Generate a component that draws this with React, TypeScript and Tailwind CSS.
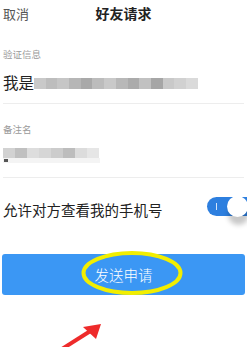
import React from "react";

const nameBlocks = ["#c9c9c9", "#bdbdbd", "#c6c6c6", "#b6b6b6", "#a9a9a9", "#bcbcbc", "#c9c9c9", "#b8b8b8", "#ababab", "#c1c1c1", "#a6a6a6", "#c9c9c9", "#d1d1d1", "#dadada"];
const remarkBlocks = ["#d2d2d2", "#c0c0c0", "#dddddd", "#d6d6d6", "#cccccc", "#bdbdbd", "#dcdcdc", "#e6e6e6"];

const App = () => {
  return (
    <div className="w-[247px] h-[347px] bg-white overflow-hidden font-['Noto_Sans_CJK_SC','Noto_Sans',sans-serif]">
      {/* header */}
      <div className="grid grid-cols-[1fr_auto_1fr] items-center h-[27px] px-[3px]">
        <span className="text-[13px] text-[#555]">取消</span>
        <span className="text-[14px] font-bold text-[#222]">好友请求</span>
        <span />
      </div>

      <div className="mt-[21px] px-[3px] text-[9.5px] leading-[12px] text-[#9a9a9a]">验证信息</div>
      <div className="mt-[12px] px-[3px] flex items-center h-[20px]">
        <span className="text-[15.5px] leading-[20px] text-[#222]">我是</span>
        <div className="flex h-[11px] mt-[3px]">
          {nameBlocks.map((c, i) => (
            <div key={i} className="w-[11.7px] h-full" style={{ backgroundColor: c }} />
          ))}
        </div>
      </div>
      <div className="mt-[11px] mx-[3px] h-px bg-[#ededed]" />

      <div className="mt-[19px] px-[3px] text-[9.5px] leading-[12px] text-[#9a9a9a]">备注名</div>
      <div className="mt-[13px] px-[3px] flex flex-col">
        <div className="flex h-[10px]">
          {remarkBlocks.map((c, i) => (
            <div key={i} className="w-[12px] h-full" style={{ backgroundColor: c }} />
          ))}
        </div>
        <div className="flex items-center h-[5px] w-[97px] bg-[#f4f4f4]">
          <div className="w-[4px] h-[3px] bg-[#555] ml-[1px]" />
        </div>
      </div>
      <div className="mt-[14px] mx-[3px] h-px bg-[#ededed]" />

      {/* switch row */}
      <div className="mt-[18px] pl-[3px] flex items-start justify-between h-[36px]">
        <span className="mt-[4px] text-[14.5px] leading-[20px] text-[#222]">允许对方查看我的手机号</span>
        <div className="relative w-[40px] h-[19px] rounded-l-full bg-[#2d7fdf] mt-[1px]">
          <div className="absolute left-[9px] top-[6px] w-px h-[7px] bg-white/80" />
          <div className="absolute right-[-1px] top-[-1px] w-[21px] h-[21px] rounded-full bg-white shadow-[1px_8px_5px_rgba(0,0,0,0.22)]" />
        </div>
      </div>

      {/* button */}
      <div className="mt-[22px] mx-[2px] relative h-[41px] rounded-[3px] bg-[#3b97f4] flex items-center justify-center">
        <span className="text-[14.5px] font-light text-white">发送申请</span>
        <svg className="absolute left-[78px] top-[-4px]" width="104" height="46" viewBox="0 0 104 46">
          <ellipse cx="52" cy="23" rx="48.5" ry="20" fill="none" stroke="#f2ee00" strokeWidth="4" />
        </svg>
      </div>

      {/* arrow */}
      <svg className="block" width="247" height="52" viewBox="0 0 247 52">
        <line x1="62" y1="54" x2="92" y2="35" stroke="#ee2b2b" strokeWidth="4" />
        <polygon points="101,29 83,32 96,44" fill="#ee2b2b" />
      </svg>
    </div>
  );
};

export default App;
